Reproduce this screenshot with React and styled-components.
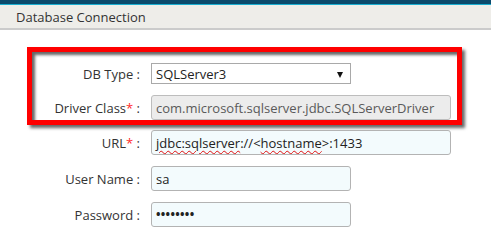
import React from "react";
import styled, { createGlobalStyle } from "styled-components";

const GlobalStyle = createGlobalStyle`
  body {
    margin: 0;
    background: #ffffff;
    font-family: "Open Sans", "Liberation Sans", sans-serif;
    color: #333333;
  }
`;

const TopBar = styled.div`
  height: 4px;
  background: #0b4a6c;
  border-bottom: 1px solid #19aed0;
`;

const Header = styled.div`
  height: 23px;
  display: flex;
  align-items: center;
  padding-left: 16px;
  background: #eeede9;
  border-bottom: 2px solid #cbcbcb;
  font-size: 13px;
  color: #333333;
`;

const Form = styled.div`
  padding-top: 17px;
  display: flex;
  flex-direction: column;
`;

const Highlight = styled.div`
  margin-left: 27px;
  width: 425px;
  border: 5px solid #ff0000;
  padding: 11px 0 0;
  display: flex;
  flex-direction: column;
  gap: 11px;
  box-shadow: 3px 3px 3px rgba(0, 0, 0, 0.6),
    inset 3px 3px 3px rgba(0, 0, 0, 0.6);
`;

const Rows = styled.div`
  padding-top: 5px;
  display: flex;
  flex-direction: column;
  gap: 11px;
`;

const Row = styled.div`
  display: grid;
  grid-template-columns: ${(p) => p.$labelWidth}px auto;
  column-gap: 11px;
  align-items: center;
`;

const Label = styled.div`
  text-align: right;
  font-size: 13px;
  color: #333333;
  white-space: nowrap;
`;

const Star = styled.span`
  color: #ff2a2a;
`;

const Select = styled.div`
  position: relative;
  box-sizing: border-box;
  width: 200px;
  height: 21px;
  border: 1px solid #a9a9a9;
  background: #ffffff;
  padding-left: 4px;
  display: flex;
  align-items: center;
  font-size: 13px;
  color: #222222;

  &::after {
    content: "";
    position: absolute;
    right: 7px;
    top: 8px;
    border-left: 3px solid transparent;
    border-right: 3px solid transparent;
    border-top: 6px solid #111111;
  }
`;

const Field = styled.div`
  box-sizing: border-box;
  width: ${(p) => p.$width}px;
  height: 25px;
  border: 1px solid ${(p) => (p.$disabled ? "#bdbdbd" : "#b3b3b3")};
  border-radius: 3px;
  background: ${(p) => (p.$disabled ? "#ececec" : "#f3fbfd")};
  padding-left: 4px;
  display: flex;
  align-items: center;
  font-size: 13px;
  color: ${(p) => (p.$disabled ? "#5a5a5a" : "#222222")};
  white-space: nowrap;
  overflow: hidden;
`;

const Misspelled = styled.span`
  text-decoration: underline wavy #e01010;
  text-decoration-thickness: 1px;
  text-underline-offset: 2px;
`;

const Dots = styled.span`
  font-size: 12px;
  letter-spacing: 0.3px;
  font-weight: 700;
`;

export default function App() {
  return (
    <>
      <GlobalStyle />
      <TopBar />
      <Header>Database Connection</Header>
      <Form>
        <Highlight>
          <Row $labelWidth={108}>
            <Label>DB Type :</Label>
            <Select>SQLServer3</Select>
          </Row>
          <Row $labelWidth={108}>
            <Label>
              Driver Class<Star>*</Star> :
            </Label>
            <Field $width={300} $disabled>
              com.microsoft.sqlserver.jdbc.SQLServerDriver
            </Field>
          </Row>
        </Highlight>
        <Rows>
          <Row $labelWidth={140}>
            <Label>
              URL<Star>*</Star> :
            </Label>
            <Field $width={300}>
              <Misspelled>jdbc:sqlserver</Misspelled>://&lt;
              <Misspelled>hostname</Misspelled>&gt;:1433
            </Field>
          </Row>
          <Row $labelWidth={140}>
            <Label>User Name :</Label>
            <Field $width={200}>sa</Field>
          </Row>
          <Row $labelWidth={140}>
            <Label>Password :</Label>
            <Field $width={200}>
              <Dots>••••••••</Dots>
            </Field>
          </Row>
        </Rows>
      </Form>
    </>
  );
}
